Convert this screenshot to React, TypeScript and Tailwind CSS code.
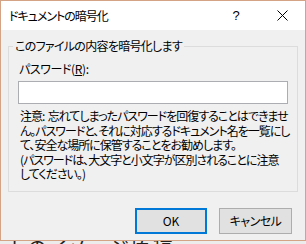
import React from "react";

const jp = { fontFamily: '"Noto Sans CJK JP", "Noto Sans", sans-serif' };

export default function App() {
  return (
    <div
      className="flex h-[244px] w-[306px] flex-col overflow-hidden bg-[#ececec] [font-feature-settings:'palt']"
      style={jp}
    >
      <div className="flex h-[241px] shrink-0 flex-col border border-[#d4a385] bg-[#f0f0f0]">
        <TitleBar />
        <div className="flex flex-1 flex-col px-[7px] pt-[8px]">
          <fieldset className="w-[290px] border border-[#dcdcdc] pb-[9px]">
            <legend className="ml-[4px] px-[2px] text-[12px] leading-[16px] tracking-[-0.7px] text-black">
              このファイルの内容を暗号化します
            </legend>
            <div className="mt-[7px] pl-[10px] text-[12px] leading-[16px] tracking-[-0.4px] text-black">
              パスワード(<span className="underline">R</span>):
            </div>
            <div className="ml-[9px] mt-[4px] h-[23px] w-[270px] border border-[#abadb3] bg-white" />
            <p className="mt-[5px] whitespace-nowrap pl-[11px] text-[12px] leading-[14.5px] tracking-[-1px] text-black">
              注意:&nbsp; 忘れてしまったパスワードを回復することはできませ
              <br />
              ん。パスワードと、それに対応するドキュメント名を一覧にし
              <br />
              て、安全な場所に保管することをお勧めします。
              <br />
              (パスワードは、大文字と小文字が区別されることに注意
              <br />
              してください。)
            </p>
          </fieldset>
          <div className="mt-[16px] flex justify-end gap-[12px] pr-[6px]">
            <button className="flex h-[26px] w-[72px] items-center justify-center border-2 border-[#0078d7] bg-[#e1e1e1] text-[12px] text-black">
              OK
            </button>
            <button className="flex h-[26px] w-[73px] items-center justify-center border border-[#adadad] bg-[#e1e1e1] text-[12px] tracking-[-0.5px] text-black">
              キャンセル
            </button>
          </div>
        </div>
      </div>
      <div className="h-[3px] overflow-hidden pl-[10px]">
        <div className="-mt-[5px] whitespace-nowrap text-[20px] leading-[24px] tracking-[2px] text-[#222]">
          トのイメージ原稿
        </div>
      </div>
    </div>
  );
}

function TitleBar() {
  return (
    <div className="flex h-[29px] shrink-0 items-center bg-white pl-[8px]">
      <span className="text-[12px] tracking-[-1px] text-black">ドキュメントの暗号化</span>
      <span
        className="ml-auto w-[12px] text-center text-[13px] text-black"
        style={{ fontFamily: '"Liberation Sans", sans-serif' }}
      >
        ?
      </span>
      <svg className="ml-[35px] mr-[17px]" width="11" height="11" viewBox="0 0 11 11">
        <path d="M0.5 0.5 L10.5 10.5 M10.5 0.5 L0.5 10.5" stroke="#000" strokeWidth="1" fill="none" />
      </svg>
    </div>
  );
}
